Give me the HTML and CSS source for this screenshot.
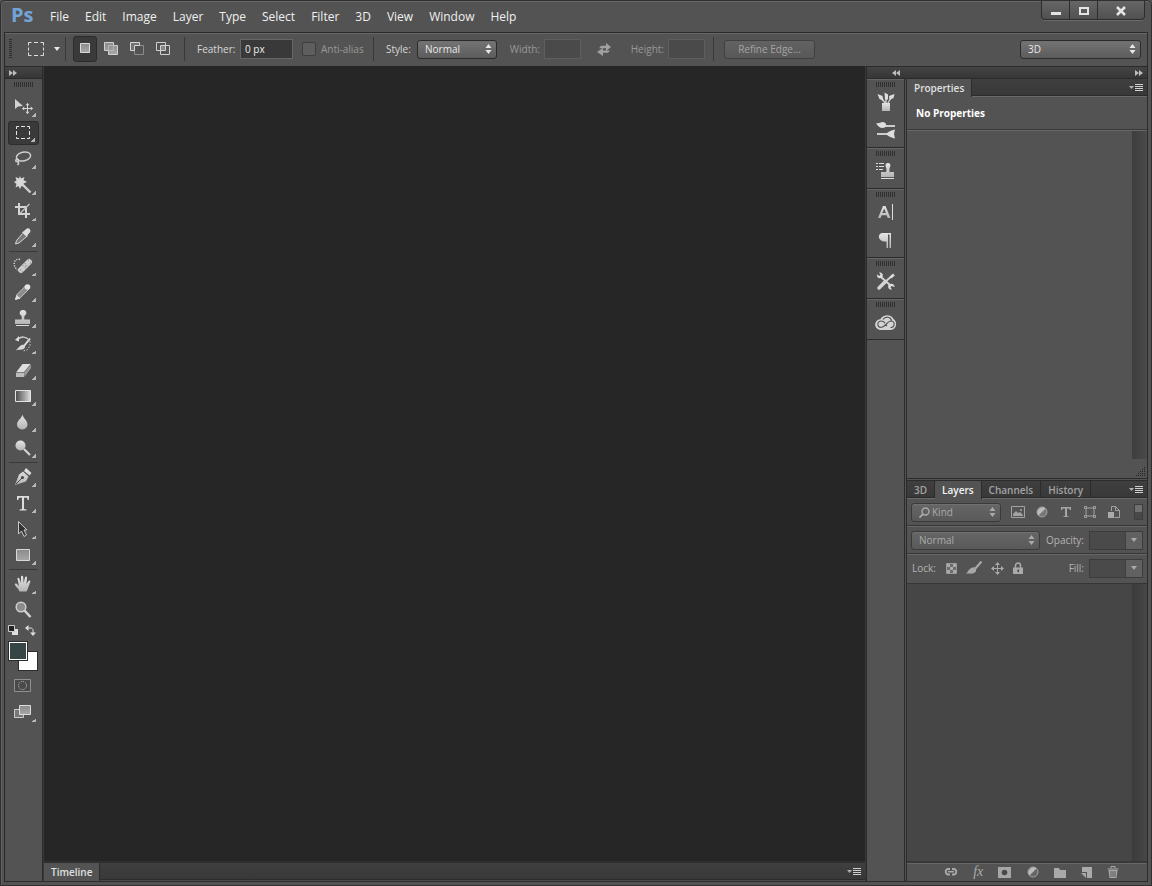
FILE: index.html
```html
<!DOCTYPE html>
<html lang="en">
<head>
<meta charset="utf-8">
<title>Ps</title>
<link rel="stylesheet" href="styles.css">
</head>
<body>
<svg class="defs" aria-hidden="true">
  <defs>
    <linearGradient id="metal" x1="0" y1="0" x2="0" y2="1"><stop offset="0" stop-color="#e6e6e6"/><stop offset="1" stop-color="#b4b4b4"/></linearGradient>
    <linearGradient id="pane" x1="0" y1="0" x2="0" y2="1"><stop offset="0" stop-color="#8a8a8a"/><stop offset="1" stop-color="#a8a8a8"/></linearGradient>
    <linearGradient id="fade" x1="0" y1="0" x2="1" y2="0"><stop offset="0" stop-color="#4a4a4a"/><stop offset="1" stop-color="#dcdcdc"/></linearGradient>
    <symbol id="updown" viewBox="0 0 7 10"><path d="M3.500 0 6.500 4h-6zM.5 6h6L3.500 10z" fill="currentColor"/></symbol>
    <symbol id="caret" viewBox="0 0 6 4"><path d="M0 0h6L3 4z" fill="currentColor"/></symbol>
    <symbol id="ffwd" viewBox="0 0 8 6"><path d="M0 0 4 3 0 6zM4 0l4 3-4 3z" fill="currentColor"/></symbol>
    <symbol id="rwd" viewBox="0 0 8 6"><path d="M4 0 0 3l4 3zM8 0 4 3l4 3z" fill="currentColor"/></symbol>
    <symbol id="panelmenu" viewBox="0 0 14 8"><path d="M0 2h5L2.500 5z" fill="#b0b0b0"/><path d="M6 .5h8M6 2.500h8M6 4.500h8M6 6.500h8" stroke="#d0d0d0"/></symbol>
  </defs>
</svg>
<div class="window">
  <header class="titlebar">
    <div class="logo">Ps</div>
    <nav class="menu">
      <button>File</button><button>Edit</button><button>Image</button><button>Layer</button><button>Type</button><button>Select</button><button>Filter</button><button>3D</button><button>View</button><button>Window</button><button>Help</button>
    </nav>
    <div class="controls">
      <button aria-label="Minimize"><svg width="10" height="10"><path d="M0 6h10v3H0z" fill="#e4e4e4"/></svg></button>
      <button aria-label="Maximize"><svg width="10" height="10"><path d="M1 2h8v6H1z" fill="none" stroke="#e4e4e4" stroke-width="2"/></svg></button>
      <button class="close" aria-label="Close"><svg width="10" height="10"><path d="M1 1l8 8M9 1 1 9" fill="none" stroke="#e4e4e4" stroke-width="2.500"/></svg></button>
    </div>
  </header>
  <main class="workspace">
    <section class="options">
      <span class="vgrip"></span>
      <button class="preset" aria-label="Tool preset"><svg width="16" height="14"><path d="M.5 3.500V.5h3M6 .5h4M12.500.5h3v3M15.500 5.500v3M15.500 10.500v3h-3M10 13.500H6M3.500 13.500h-3v-3M.5 8.500v-3" fill="none" stroke="#e0e0e0"/></svg><svg width="6" height="4" class="preset-caret"><use href="#caret"/></svg></button>
      <div class="modes">
        <button class="mode on" aria-label="New selection"><svg width="14" height="14"><path d="M2.500 2.500h9v9h-9z" fill="url(#pane)" stroke="#dadada"/></svg></button>
        <button class="mode" aria-label="Add to selection"><svg width="14" height="14"><path d="M.5 1.500h9v3h4v9h-9v-4h-4z" fill="url(#pane)" stroke="#d0d0d0"/><path d="M4.500 4.500h5v5h-5z" fill="none" stroke="#b4b4b4"/></svg></button>
        <button class="mode" aria-label="Subtract from selection"><svg width="14" height="14"><path d="M4.500 4.500h9v9h-9z" fill="none" stroke="#8c8c8c"/><path d="M.5 1.500h9v3h-5v5h-4z" fill="#737373" stroke="#d8d8d8"/></svg></button>
        <button class="mode" aria-label="Intersect with selection"><svg width="14" height="14"><path d="M4.500 4.500h5v5h-5z" fill="#888"/><path d="M.5 1.500h9v8h-9zM4.500 4.500h9v9h-9z" fill="none" stroke="#d0d0d0"/></svg></button>
      </div>
      <div class="group feather">
        <label for="feather">Feather:</label><input id="feather" class="field" type="text" value="0 px">
        <label class="check dim"><input type="checkbox" disabled>Anti-alias</label>
      </div>
      <div class="group style">
        <label for="style">Style:</label>
        <span class="select lit"><select id="style"><option>Normal</option></select><svg width="7" height="10"><use href="#updown"/></svg></span>
        <label class="dim" for="width">Width:</label><input id="width" class="field small" type="text" disabled>
        <button class="swap" aria-label="Swap height and width" disabled><svg width="15" height="13"><path d="M4 2.800h5V0l5 4-5 4V5.200H2zM11 9.800H6V13L0 9l6-4v2.500h7z" fill="#a0a0a0"/></svg></button>
        <label class="dim" for="height">Height:</label><input id="height" class="field small" type="text" disabled>
      </div>
      <button class="refine" disabled>Refine Edge...</button>
      <span class="select lit workspace-pick"><select aria-label="Workspace"><option>3D</option></select><svg width="7" height="10"><use href="#updown"/></svg></span>
    </section>
    <div class="body">
      <aside class="toolbar">
        <div class="strip"><svg width="8" height="6"><use href="#ffwd"/></svg></div>
        <div class="grip"></div>
        <button class="tool more" aria-label="Move"><svg viewBox="0 0 20 20"><path d="M2 2v10l3-2.500L10 9z" fill="#d2d2d2"/><path d="M14.500 6.500v10M9.500 11.500h10" stroke="#d6d6d6"/><path d="M14.500 6l2 2.200h-4zM14.500 17l2-2.200h-4zM9 11.500l2.200-2v4zM20 11.500l-2.200-2v4z" fill="#d6d6d6"/></svg></button>
        <button class="tool more on" aria-label="Rectangular marquee"><svg viewBox="0 0 20 20"><path d="M3.500 6V3.500H6M8 3.500h4M14 3.500h2.500V6M16.500 8v4M16.500 14v1.500H14M12 15.500H8M6 15.500H3.500V14M3.500 12V8" fill="none" stroke="#e4e4e4"/></svg></button>
        <button class="tool more" aria-label="Lasso"><svg viewBox="0 0 20 20"><g fill="none" stroke="#cfcfcf" stroke-width="1.500"><ellipse cx="10.500" cy="7.500" rx="7.200" ry="4.400" transform="rotate(-12 10.500 7.500)"/><path d="M4 10c-2 1-1.500 3 .5 2.500s1.500-2-.5-2.500M4.500 12.500c2 1 1 2.500 0 3.500"/></g></svg></button>
        <button class="tool more" aria-label="Magic wand"><svg viewBox="0 0 20 20"><path d="M7 1l1 2.500L11.500 2 10.500 5l3.500 2-3.500 1.500 1.500 3.500-3.500-1-1.500 3-1.500-3-3 1.500 1-3.500L1 7l2.500-1.500L2.500 2l3.500 1.500z" fill="#d8d8d8"/><path d="M10 10l7.500 7.500" stroke="#d0d0d0" stroke-width="2.400"/></svg></button>
        <button class="tool more" aria-label="Crop"><svg viewBox="0 0 20 20"><path d="M6 2v11h11M2 6h11v11" fill="none" stroke="#d4d4d4" stroke-width="2"/><path d="M7 12.500 16.500 3" stroke="#c4c4c4" stroke-width="1.200"/></svg></button>
        <button class="tool more" aria-label="Eyedropper"><svg viewBox="0 0 20 20"><path d="M11.500 3.500c3-3 4.500-2.500 5.500-1s.5 3-2 5l-1 3-5-5z" fill="#dcdcdc"/><path d="M9.500 6.500l-6 7-1 3.500 3.500-1 7-6" fill="#777" stroke="#d4d4d4"/></svg></button>
        <hr>
        <button class="tool more" aria-label="Spot healing brush"><svg viewBox="0 0 20 20"><path d="M7 3.500C2 2 0 7 2 11l2 3" fill="none" stroke="#ddd" stroke-width="1.400" stroke-dasharray="1.200 1.300"/><path d="M8 14 16 6" stroke="#cdcdcd" stroke-width="6" stroke-linecap="round"/><path d="M9.500 9l5 5M11.500 7l5 5" stroke="#777" stroke-dasharray="1 1.500"/><path d="M7 14h1M9 16h1M15 4h1M17 7h1M12 10h1" stroke="#777"/></svg></button>
        <button class="tool more" aria-label="Brush"><svg viewBox="0 0 20 20"><path d="M2.500 17.500l1.500-5 8.500-8.500 3 3.500-8 8z" fill="#8c8c8c" stroke="#c4c4c4"/><path d="M2 18l1.500-5 4 3.500z" fill="#ddd"/><circle cx="14.500" cy="5" r="2.800" fill="#e4e4e4"/></svg></button>
        <button class="tool more" aria-label="Clone stamp"><svg viewBox="0 0 20 20"><path d="M10 2a3 3 0 0 1 2 5.500c-1 1-1 2.500-.5 4h5.500V16H2v-4.500h6.500c.5-1.500.5-3-.5-4A3 3 0 0 1 10 2z" fill="url(#metal)"/><path d="M3 17.500h13" stroke="#ddd"/></svg></button>
        <button class="tool more" aria-label="History brush"><svg viewBox="0 0 20 20"><path d="M5 5c4-3 8-2 10 0" fill="none" stroke="#ccc" stroke-width="1.500"/><path d="M2 6l4-4v5.500z" fill="#ddd"/><path d="M17 4.500 11 12" stroke="#ddd" stroke-width="2"/><path d="M11.500 11c1.500 2 0 4-2.500 4.500s-4 0-6.500 1c2-1.500 2.500-2.500 4-4s3.500-2 5-1.500z" fill="#d8d8d8"/><path d="M17 7v5l-3 4-4 1" fill="none" stroke="#ccc" stroke-dasharray="1.500 1.500"/></svg></button>
        <button class="tool more" aria-label="Eraser"><svg viewBox="0 0 20 20"><path d="M3 12.500 9.500 4H18l-7 8.500z" fill="#dedede"/><path d="M3 12.500h8V17H3z" fill="#bcbcbc"/><path d="M11 12.500 18 4v4l-6.500 9z" fill="#999"/><path d="M3 12.500h8L18 4" fill="none" stroke="#666" stroke-width=".7"/></svg></button>
        <button class="tool more" aria-label="Gradient"><svg viewBox="0 0 20 20"><path d="M2.500 4.500h15v11h-15z" fill="url(#fade)" stroke="#e4e4e4"/></svg></button>
        <button class="tool more" aria-label="Blur"><svg viewBox="0 0 20 20"><path d="M9.500 2.500c.5 3.500 5 6 5 10a5.200 5 0 0 1-10.500 0c0-4 5-6.500 5.500-10z" fill="url(#metal)"/></svg></button>
        <button class="tool more" aria-label="Dodge"><svg viewBox="0 0 20 20"><circle cx="7.500" cy="7.500" r="5" fill="url(#metal)"/><path d="M11 11l6 6" stroke="#d2d2d2" stroke-width="2.200"/></svg></button>
        <hr>
        <button class="tool more" aria-label="Pen"><svg viewBox="0 0 20 20"><path d="M13 1l5.500 5-2 2.500L11 4zM10 4.500 15.500 9.500l-2.500 5L2 18l4-10.500z" fill="url(#metal)"/><path d="M3 17l6-6" stroke="#444"/><circle cx="9.500" cy="10.500" r="1.500" fill="#444"/></svg></button>
        <button class="tool more" aria-label="Type"><svg viewBox="0 0 20 20"><path d="M4 3h12v4h-1.200L14 4.800h-3V16l2.500.6v.9h-7v-.9L9 16V4.800H6L5.200 7H4z" fill="#dcdcdc"/></svg></button>
        <button class="tool more" aria-label="Path selection"><svg viewBox="0 0 20 20"><path d="M5.500 2.500v12.500l3-3 2.500 5.500 2.500-1.500-2.500-5H14z" fill="#343434" stroke="#c8c8c8"/></svg></button>
        <button class="tool more" aria-label="Rectangle"><svg viewBox="0 0 20 20"><path d="M3.500 4.500h13v11h-13z" fill="url(#pane)" stroke="#d8d8d8"/></svg></button>
        <hr>
        <button class="tool more" aria-label="Hand"><svg viewBox="0 0 20 20"><path d="M6.500 17.500c-1-3-3-4-4.500-6.500-.8-1.500.8-2 1.700-1.200L6 12 4.500 5c-.3-1.500 1.500-1.900 1.900-.5L8 9V3c0-1.700 2-1.700 2.200 0l.4 6 1.400-5.500c.5-1.500 2.200-1 2 .5L13.500 10l2-3c.8-1.200 2.300-.4 1.700.9C16 11 15 15 13.500 17.500z" fill="url(#metal)"/></svg></button>
        <button class="tool" aria-label="Zoom"><svg viewBox="0 0 20 20"><circle cx="8" cy="7" r="4.800" fill="#8c8c8c" stroke="#cfcfcf" stroke-width="1.500"/><path d="M11.500 10.500l6 6.500" stroke="#d4d4d4" stroke-width="2.500"/></svg></button>
        <div class="mini">
          <button aria-label="Default colors"><svg width="10" height="10"><path d="M4 4h6v6H4z" fill="#ddd"/><path d="M.5.5h6v6h-6z" fill="#222" stroke="#ccc"/></svg></button>
          <button aria-label="Switch colors"><svg width="11" height="11"><path d="M2 3h4.500L8 4.500V8" fill="none" stroke="#ddd"/><path d="M0 3l3.500-3v6zM8 11 5 7.500h6z" fill="#ddd"/></svg></button>
        </div>
        <div class="swatches"><button class="back" aria-label="Background color"></button><button class="fore" aria-label="Foreground color"></button></div>
        <button class="tool" aria-label="Quick mask"><svg viewBox="0 0 20 20"><path d="M1.500 3.500h16v12h-16z" fill="#4a4a4a" stroke="#909090"/><circle cx="9.500" cy="9.500" r="4" fill="none" stroke="#c8c8c8" stroke-dasharray="1 1.100"/></svg></button>
        <button class="tool more" aria-label="Screen mode"><svg viewBox="0 0 20 20"><path d="M1.500 7.500h9v8h-9z" fill="#777" stroke="#ccc"/><path d="M6.500 3.500h11v9h-11z" fill="url(#pane)" stroke="#ddd"/></svg></button>
      </aside>

      <section class="center">
        <div class="canvas"></div>
        <div class="tabs"><button class="tab on">Timeline</button><button class="pmenu" aria-label="Timeline menu"><svg width="14" height="8"><use href="#panelmenu"/></svg></button></div>
      </section>

      <section class="right">
        <div class="strip wide"><svg width="8" height="6"><use href="#rwd"/></svg><svg width="8" height="6"><use href="#ffwd"/></svg></div>
        <aside class="dock">
          <div class="dockgroup"><div class="grip"></div>
            <button aria-label="Brush presets"><svg viewBox="0 0 22 22"><path d="M7 12h8v8H7z" fill="url(#metal)"/><path d="M10 12 5 5M11 12V4M13 12l4-7" stroke="#ccc" stroke-width="1.500"/><path d="M2.500 3l5 2 1 5-4-2zM9.500 1.500l3.500 2v5h-3zM14 5l5.500-2-1 4-4 2z" fill="#ddd"/></svg></button>
            <button aria-label="Brush"><svg viewBox="0 0 22 22"><path d="M10 6h10v2H10z" fill="#ccc"/><path d="M1 4c3 1 4-1 7-1 3 .5 4 3 2.500 5-3 2-7 1-9.500-4z" fill="#ddd"/><path d="M2 14h11v2H2z" fill="#ccc"/><path d="M11 15c2-2 5-4 9-4.500l-1 4.500 1 4.500c-4-.5-7-2.500-9-4.500z" fill="#ddd"/></svg></button>
          </div>
          <div class="dockgroup"><div class="grip"></div>
            <button aria-label="Clone source"><svg viewBox="0 0 22 22"><path d="M1 3.500h2M1 6.500h2M1 9.500h2M4 3.500h5M4 6.500h5M4 9.500h4" stroke="#ddd"/><path d="M13 3a2.500 2.500 0 0 1 2 4c-.8 1.500-.6 3-.4 5H19v5H6v-5h5.200c.3-2 .5-3.500-.3-5A2.500 2.500 0 0 1 13 3z" fill="url(#metal)"/><path d="M6 18.500h13" stroke="#ddd"/></svg></button>
          </div>
          <div class="dockgroup"><div class="grip"></div>
            <button aria-label="Character"><svg viewBox="0 0 22 22"><path d="M3 17 8 5h2.500l5 12h-2.800l-1-2.800H6.600L5.600 17zM7.300 12h3.600L9.200 7.500z" fill="url(#metal)"/><path d="M17.500 3v16" stroke="#ddd"/></svg></button>
            <button aria-label="Paragraph"><svg viewBox="0 0 22 22"><path d="M16 4v15h-1.500V5.500H13V19h-1.500v-6.500C2 13 2 4 8 4z" fill="url(#metal)"/></svg></button>
          </div>
          <div class="dockgroup"><div class="grip"></div>
            <button aria-label="Tool presets"><svg viewBox="0 0 22 22"><path d="M6 7l9 8M18 5l-8 7" stroke="#d4d4d4" stroke-width="1.800"/><path d="M10.500 11.500 4 18" stroke="#d4d4d4" stroke-width="3.500" stroke-linecap="round"/><path d="M4 2.500c3-.5 4.500 2 3.500 4.500-2.500 2.500-6 1-5.500-2.500l2.500 1.500 1-1.500zM17 19.500c-3 .5-4.500-2-3.500-4.500 2.500-2.500 6.500-1 6 2l-3-1-1 1.500z" fill="#ddd"/><path d="M15.500 7.500 19 4.500" stroke="#ddd" stroke-width="2.500"/></svg></button>
          </div>
          <div class="dockgroup"><div class="grip"></div>
            <button aria-label="Creative Cloud"><svg viewBox="0 0 22 22"><path d="M6.500 19C-1.500 19-2 9 5.500 8 8.500 2.500 17 3.500 18.500 8c4.500 3 3 11-3 11z" fill="#d4d4d4"/><g fill="none" stroke="#555" stroke-width="1.200"><path d="M15.500 16.500c4.500 0 5-6 .5-6.500-2.500 0-3.500 2-5 3.500s-3 3-5 3c-4.500-.5-4-6.500.5-6.500 1.500 0 2.500 1 3.500 2"/><path d="M8 8.500c2.500-3.500 8-3 8.500 1.500M12 15l-2-1.500"/></g></svg></button>
          </div>
        </aside>
        <div class="panels">
          <section class="panel properties">
            <div class="tabs"><button class="tab on">Properties</button><button class="pmenu" aria-label="Properties menu"><svg width="14" height="8"><use href="#panelmenu"/></svg></button></div>
            <h2>No Properties</h2>
            <div class="scroll"><div class="track"></div></div>
            <div class="resize"><svg width="10" height="10"><path d="M8 1.500h1M6 3.500h3M4 5.500h5M2 7.500h7M0 9.500h9" stroke="#222" stroke-dasharray="1 1"/></svg></div>
          </section>
          <section class="panel layers">
            <div class="tabs"><button class="tab">3D</button><button class="tab on bright">Layers</button><button class="tab">Channels</button><button class="tab">History</button><button class="pmenu" aria-label="Layers menu"><svg width="14" height="8"><use href="#panelmenu"/></svg></button></div>
            <div class="row filter">
              <span class="select kind"><svg class="find" width="11" height="11"><circle cx="6.500" cy="4.500" r="3.500" fill="none" stroke="#aaa" stroke-width="1.400"/><path d="M4 7 .5 10.500" stroke="#aaa" stroke-width="1.800"/></svg><select aria-label="Filter type"><option>Kind</option></select><svg width="7" height="10"><use href="#updown"/></svg></span>
              <div class="icons">
                <button aria-label="Pixel layers"><svg width="14" height="12"><path d="M.5.5h13v11H.5z" fill="none" stroke="#a2a2a2"/><path d="M2 9V8l3-3 2 2 2-1 3 3v1H2z" fill="#a2a2a2"/><circle cx="10" cy="4" r="1" fill="#a2a2a2"/></svg></button>
                <button aria-label="Adjustment layers"><svg width="12" height="12"><circle cx="6" cy="6" r="5" fill="#777" stroke="#a2a2a2"/><path d="M2.500 9.500a5 5 0 0 1 7-7z" fill="#bbb"/></svg></button>
                <button aria-label="Type layers"><svg width="10" height="12"><path d="M0 1h10v3H9l-.8-1.600H6V10l1.800.5v.5H2.200v-.5L4 10V2.400H1.800L1 4H0z" fill="#a6a6a6"/></svg></button>
                <button aria-label="Shape layers"><svg width="12" height="12"><path d="M2 2h8v8H2z" fill="none" stroke="#a2a2a2"/><path d="M.5.5h2v2h-2zM9.500.5h2v2h-2zM.5 9.500h2v2h-2zM9.500 9.500h2v2h-2z" fill="#555" stroke="#a2a2a2"/></svg></button>
                <button aria-label="Smart objects"><svg width="12" height="13"><path d="M3.500 5V.5h4l4 4v7h-5M7.500.5v4h4" fill="none" stroke="#a2a2a2"/><path d="M0 6h6v6H0z" fill="#aaa"/></svg></button>
              </div>
              <button class="toggle" aria-label="Layer filtering"></button>
            </div>
            <div class="row blend">
              <span class="select mode-pick"><select aria-label="Blend mode"><option>Normal</option></select><svg width="7" height="10"><use href="#updown"/></svg></span>
              <label for="opacity">Opacity:</label>
              <span class="combo"><input id="opacity" type="text" disabled><button aria-label="Opacity slider"><svg width="6" height="4"><use href="#caret"/></svg></button></span>
            </div>
            <div class="row locks">
              <span>Lock:</span>
              <button aria-label="Lock transparent pixels"><svg width="11" height="11"><path d="M.5.5h10v10H.5z" fill="#6c6c6c" stroke="#999"/><path d="M1 1h3v3H1zM7 1h3v3H7zM4 4h3v3H4zM1 7h3v3H1zM7 7h3v3H7z" fill="#aaa"/></svg></button>
              <button aria-label="Lock image pixels"><svg width="16" height="14"><path d="M15.500.5 9 8" stroke="#a8a8a8" stroke-width="2.200"/><path d="M9.500 7c1.500 3 0 5-3 5.500S2 12 0 13c2-2 2-4 4.500-5.500S8.500 6 9.500 7z" fill="#a8a8a8"/></svg></button>
              <button aria-label="Lock position"><svg width="13" height="13"><path d="M6.500 1v11M1 6.500h11" stroke="#aaa"/><path d="M6.500 0l2.500 3H4zM6.500 13 9 10H4zM0 6.500 3 4v5zM13 6.500 10 4v5z" fill="#aaa"/></svg></button>
              <button aria-label="Lock all"><svg width="10" height="13"><path d="M2.500 6V3.500a2.500 2.500 0 0 1 5 0V6" fill="none" stroke="#aaa" stroke-width="1.500"/><path d="M0 5.500h10V12H0z" fill="#aaa"/><path d="M4.500 7.500h1.500V10H4.500z" fill="#444"/></svg></button>
              <label for="fill">Fill:</label>
              <span class="combo"><input id="fill" type="text" disabled><button aria-label="Fill slider"><svg width="6" height="4"><use href="#caret"/></svg></button></span>
            </div>
            <div class="scroll list"><div class="track"></div></div>
            <footer class="actions">
              <button aria-label="Link layers"><svg width="14" height="10"><path d="M6 7.500H4a2.800 2.800 0 0 1 0-5.500h2M8 2h2a2.800 2.800 0 0 1 0 5.500H8" fill="none" stroke="#aaa" stroke-width="1.800"/><path d="M4 4.700h6" stroke="#aaa" stroke-width="1.500"/></svg></button>
              <button class="fx" aria-label="Layer style">fx</button>
              <button aria-label="Add mask"><svg width="13" height="11"><path d="M0 0h13v11H0z" fill="#a6a6a6"/><circle cx="6.500" cy="5.500" r="2.800" fill="#4a4a4a"/></svg></button>
              <button aria-label="New adjustment layer"><svg width="12" height="12"><circle cx="6" cy="6" r="5" fill="#666" stroke="#a2a2a2"/><path d="M2.500 9.500a5 5 0 0 1 7-7z" fill="#bbb"/></svg></button>
              <button aria-label="New group"><svg width="12" height="11"><path d="M0 1h5l1 2h6v8H0z" fill="#aaa"/></svg></button>
              <button aria-label="New layer"><svg width="11" height="11"><path d="M1 0h10v11H6V5H1z" fill="#aaa"/><path d="M0 6h5v5z" fill="#aaa"/></svg></button>
              <button aria-label="Delete layer"><svg width="12" height="12"><path d="M.5 3h11M4 2.500v-2h4v2" fill="none" stroke="#aaa"/><path d="M1.500 4h9l-1 8h-7z" fill="#aaa"/><path d="M4 5v6M6 5v6M8 5v6" stroke="#555"/></svg></button>
            </footer>
          </section>
        </div>
      </section>
    </div>
  </main>
</div>
</body>
</html>
```
FILE: styles.css
```css
* { box-sizing: border-box; }
body {
  margin: 0;
  background: #535353;
  color: #d8d8d8;
  font: 10px/14px "Open Sans", "Noto Sans", sans-serif;
}
button, input, select { font: inherit; color: inherit; margin: 0; padding: 0; border: 0; background: none; }
svg { display: block; flex: none; }
.defs { position: absolute; width: 0; height: 0; }

.window {
  display: flex;
  flex-direction: column;
  height: 100vh;
  border: 1px solid #303030;
  border-radius: 5px 5px 0 0;
  background: #535353;
  box-shadow: inset 0 1px #6a6a6a, inset 1px 0 #606060;
}

/* Title bar */
.titlebar { display: flex; height: 31px; flex: none; padding: 0 6px 0 10px; }
.logo { width: 32px; color: #74a3d8; font: bold 20px/28px "Open Sans", sans-serif; }
.menu { display: flex; flex: 1; gap: 16px; padding-left: 7px; height: 31px; }
.menu button { font-size: 12px; line-height: 31px; color: #f0f0f0; }
.controls { display: flex; height: 19px; border: 1px solid #2c2c2c; border-top: 0; border-radius: 0 0 4px 4px; background: linear-gradient(#666, #505050); box-shadow: 0 1px #6a6a6a; }
.controls button { display: flex; align-items: center; justify-content: center; width: 28px; padding-top: 1px; border-right: 1px solid #2c2c2c; }
.controls .close { width: 46px; border-right: 0; }

.workspace { display: flex; flex-direction: column; flex: 1; min-height: 0; margin: 0 3px 3px; border: 1px solid #2b2b2b; }

/* Options bar */
.options { display: flex; align-items: center; flex: none; height: 33px; padding: 0 6px 2px 4px; border-top: 1px solid #676767; }
.vgrip { width: 3px; height: 20px; background: repeating-linear-gradient(#2e2e2e 0 1px, transparent 1px 2px); }
.preset { display: flex; align-items: center; gap: 10px; height: 24px; width: 54px; padding-left: 16px; border-right: 1px solid #383838; color: #e8e8e8; }
.modes { display: flex; align-items: center; gap: 2px; height: 24px; width: 119px; padding-left: 7px; border-right: 1px solid #383838; }
.mode { display: flex; justify-content: center; align-items: center; width: 24px; height: 26px; }
.mode svg { margin-bottom: 2px; }
.mode.on { border: 1px solid #2c2c2c; border-radius: 3px; background: #3a3a3a; }
.group { display: flex; align-items: center; height: 24px; border-right: 1px solid #383838; }
.feather { width: 189px; padding-left: 12px; }
.feather > label:first-child { width: 43px; }
.style { width: 340px; padding-left: 12px; }
.style > label { width: 31px; }
.style > .dim { width: 47px; text-align: right; padding-right: 4px; }
.field { width: 53px; height: 20px; padding: 0 4px; border: 1px solid #666; background: #393939; color: #eee; }
.field.small { width: 37px; background: #4a4a4a; border-color: #5e5e5e; }
.dim { color: #989898; }
.check { display: flex; align-items: center; gap: 5px; margin-left: 9px; }
.check input { appearance: none; width: 14px; height: 14px; border: 1px solid #3e3e3e; border-radius: 2px; background: #5e5e5e; }
.swap { margin: 0 0 0 16px; width: 15px; }
.style .swap + .dim { width: 56px; }
.refine { width: 91px; height: 19px; margin-left: 10px; border: 1px solid #404040; border-radius: 3px; background: linear-gradient(#626262, #595959); color: #a4a4a4; line-height: 15px; }

.select { display: flex; position: relative; align-items: center; height: 19px; border: 1px solid #3a3a3a; border-radius: 3px; background: linear-gradient(#666, #595959); box-shadow: inset 0 1px #707070; color: #aaa; }
.select select { appearance: none; width: 100%; height: 17px; padding: 0 18px 0 7px; line-height: 17px; outline: 0; }
.select svg { position: absolute; right: 4px; pointer-events: none; }
.lit { width: 80px; border-color: #2b2b2b; background: linear-gradient(#747474, #5c5c5c); color: #e8e8e8; }
.workspace-pick { width: 121px; margin-left: auto; }

/* Workspace body */
.body { display: grid; grid-template-columns: 38px minmax(0, 1fr) 281px; flex: 1; min-height: 0; }
.strip { display: flex; align-items: center; height: 13px; flex: none; padding-left: 4px; border: solid #2b2b2b; border-width: 1px 0; background: linear-gradient(#444, #363636); color: #bcbcbc; }
.strip.wide { grid-column: 1 / -1; justify-content: space-between; padding: 0 4px 0 25px; }
.grip { height: 5px; width: 20px; flex: none; background: repeating-linear-gradient(90deg, #303030 0 1px, transparent 1px 2px); }

/* Toolbar */
.toolbar { display: flex; flex-direction: column; border-right: 1px solid #2b2b2b; }
.toolbar .grip { margin: 3px 0 7px 9px; }
.tool { display: flex; flex: none; position: relative; align-items: center; width: 31px; height: 24px; margin: 1px 0 1px 3px; padding: 0 0 0 5px; }
.tool svg { width: 20px; height: 20px; }
.tool.on { padding-left: 4px; border: 1px solid #2c2c2c; border-radius: 3px; background: #3a3a3a; }
.more::after { content: ""; position: absolute; right: 3px; bottom: 2px; width: 4px; height: 4px; background: linear-gradient(135deg, transparent 50%, #b8b8b8 50%); }
.toolbar hr { width: 29px; height: 1px; flex: none; margin: 1px 4px; border: 0; background: #3a3a3a; }
.mini { display: flex; justify-content: space-between; align-items: center; height: 16px; flex: none; padding: 0 6px 2px 3px; }
.swatches { display: grid; flex: none; width: 30px; height: 30px; margin: 2px 0 2px 3px; }
.swatches button { grid-area: 1 / 1; width: 20px; height: 20px; border: 1px solid #2c2c2c; }
.fore { background: #374546; box-shadow: inset 0 0 0 1px #fff; }
.swatches .back { background: #fff; justify-self: end; align-self: end; }

/* Canvas and timeline */
.center { display: flex; flex-direction: column; min-width: 0; border: solid #383838; border-width: 0 1px; }
.canvas { flex: 1; background: #262626; }
.tabs { display: flex; flex: none; height: 18px; border-bottom: 1px solid #6a6a6a; background: linear-gradient(#3f3f3f, #383838); box-shadow: inset 0 -1px #2b2b2b; }
.center .tabs { height: 20px; border-top: 2px solid #2f2f2f; border-bottom-color: #4a4a4a; }
.tab { padding: 0 7px; border-right: 1px solid #2b2b2b; color: #a2a2a2; font-weight: 600; line-height: 16px; }
.tab.on { background: #535353; margin-bottom: -1px; color: #e0e0e0; }
.tab.bright { color: #f4f4f4; }
.pmenu { margin-left: auto; padding-right: 4px; }

/* Right side */
.right { display: grid; grid-template: 13px minmax(0, 1fr) / 38px minmax(0, 1fr); border-left: 1px solid #2b2b2b; }
.dock { border-right: 1px solid #2b2b2b; }
.dockgroup { padding-top: 3px; border-bottom: 1px solid #2b2b2b; box-shadow: inset 0 1px #666; }
.dockgroup .grip { margin: 0 0 4px 9px; }
.dockgroup button { display: flex; align-items: center; justify-content: center; width: 37px; height: 28px; padding-bottom: 6px; }
.dockgroup svg { width: 22px; height: 22px; }
.panels { display: grid; grid-template-rows: 401px minmax(0, 1fr); margin-left: 1px; border-left: 1px solid #2b2b2b; }
.panel { display: flex; flex-direction: column; min-height: 0; }
.layers { border-top: 1px solid #2b2b2b; }
.properties { border-bottom: 1px solid #2b2b2b; margin-bottom: 1px; }
.properties h2 { height: 33px; flex: none; margin: 0; padding-left: 9px; border-bottom: 1px solid #393939; color: #fff; font-size: 10px; line-height: 32px; }
.scroll { display: flex; flex: 1; justify-content: flex-end; border-top: 1px solid #686868; }
.track { width: 15px; background: linear-gradient(90deg, #3e3e3e, #4a4a4a); }
.resize { display: flex; justify-content: flex-end; align-items: flex-end; height: 19px; flex: none; padding: 0 1px 2px; }
.row { display: flex; align-items: center; flex: none; height: 28px; padding: 0 4px; border-bottom: 1px solid #363636; color: #b4b4b4; }
.row + .row { border-top: 1px solid #676767; }
.row.filter { height: 27px; }
.kind { width: 90px; }
.kind select { padding-left: 20px; }
.select .find { left: 7px; right: auto; }
.icons { display: flex; flex: 1; gap: 10px; align-items: center; padding-left: 10px; }
.icons button { display: flex; justify-content: center; width: 14px; }
.toggle { width: 9px; height: 16px; border: 1px solid #3e3e3e; background: linear-gradient(#707070 0 50%, #484848 50%); }
.mode-pick { width: 129px; }
.blend label { flex: 1; text-align: right; padding-right: 5px; }
.combo { display: flex; width: 54px; height: 19px; border: 1px solid #3c3c3c; }
.combo input { width: 35px; min-width: 0; background: #4a4a4a; }
.combo button { display: flex; flex: 1; align-items: center; justify-content: center; background: #616161; border-left: 1px solid #404040; color: #aaa; }
.row.locks { height: 30px; gap: 9px; padding-bottom: 2px; }
.locks > span:first-child { width: 26px; padding-left: 1px; }
.locks label { flex: 1; text-align: right; margin-right: -4px; }
.list { background: #464646; border-top: 0; }
.list .track { background: linear-gradient(90deg, #3b3b3b, #474747); }
.actions { display: flex; align-items: center; justify-content: space-between; flex: none; height: 20px; padding: 0 28px 0 37px; border-top: 2px solid #383838; box-shadow: inset 0 1px #686868; }
.fx { color: #aaa; font: italic 14px/14px "Liberation Serif", serif; }
```
